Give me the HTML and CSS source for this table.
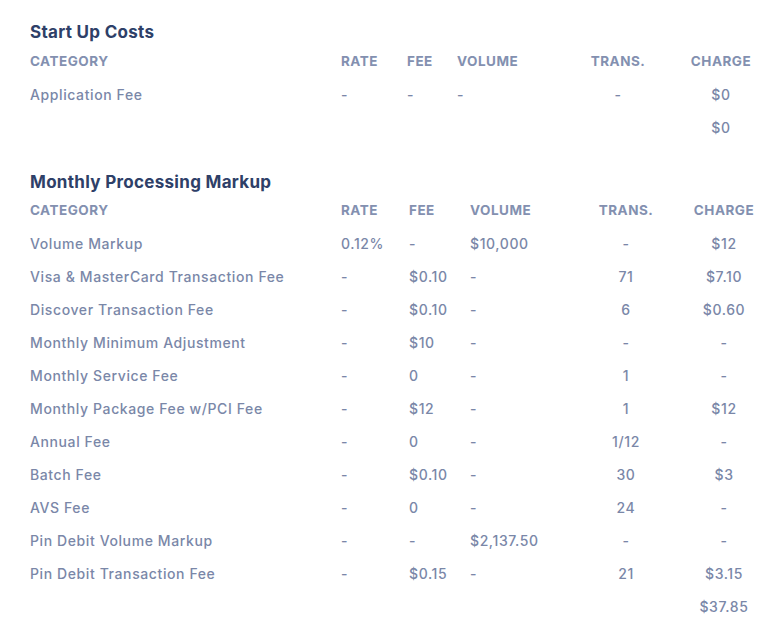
FILE: index.html
```html
<!DOCTYPE html>
<html>
<head>
<meta charset="utf-8">
<link rel="stylesheet" href="styles.css">
</head>
<body>
<div class="page">
  <section class="section s1">
    <h2 class="title">Start Up Costs</h2>
    <div class="grid g1">
      <div class="row head"><span>Category</span><span>Rate</span><span>Fee</span><span>Volume</span><span class="c">Trans.</span><span class="c">Charge</span></div>
      <div class="row"><span>Application Fee</span><span>-</span><span>-</span><span>-</span><span class="c">-</span><span class="c">$0</span></div>
      <div class="row"><span></span><span></span><span></span><span></span><span class="c"></span><span class="c">$0</span></div>
    </div>
  </section>
  <section class="section s2">
    <h2 class="title">Monthly Processing Markup</h2>
    <div class="grid g2">
      <div class="row head"><span>Category</span><span>Rate</span><span>Fee</span><span>Volume</span><span class="c">Trans.</span><span class="c">Charge</span></div>
      <div class="row"><span>Volume Markup</span><span>0.12%</span><span>-</span><span>$10,000</span><span class="c">-</span><span class="c">$12</span></div>
      <div class="row"><span>Visa &amp; MasterCard Transaction Fee</span><span>-</span><span>$0.10</span><span>-</span><span class="c">71</span><span class="c">$7.10</span></div>
      <div class="row"><span>Discover Transaction Fee</span><span>-</span><span>$0.10</span><span>-</span><span class="c">6</span><span class="c">$0.60</span></div>
      <div class="row"><span>Monthly Minimum Adjustment</span><span>-</span><span>$10</span><span>-</span><span class="c">-</span><span class="c">-</span></div>
      <div class="row"><span>Monthly Service Fee</span><span>-</span><span>0</span><span>-</span><span class="c">1</span><span class="c">-</span></div>
      <div class="row"><span>Monthly Package Fee w/PCI Fee</span><span>-</span><span>$12</span><span>-</span><span class="c">1</span><span class="c">$12</span></div>
      <div class="row"><span>Annual Fee</span><span>-</span><span>0</span><span>-</span><span class="c">1/12</span><span class="c">-</span></div>
      <div class="row"><span>Batch Fee</span><span>-</span><span>$0.10</span><span>-</span><span class="c">30</span><span class="c">$3</span></div>
      <div class="row"><span>AVS Fee</span><span>-</span><span>0</span><span>-</span><span class="c">24</span><span class="c">-</span></div>
      <div class="row"><span>Pin Debit Volume Markup</span><span>-</span><span>-</span><span>$2,137.50</span><span class="c">-</span><span class="c">-</span></div>
      <div class="row"><span>Pin Debit Transaction Fee</span><span>-</span><span>$0.15</span><span>-</span><span class="c">21</span><span class="c">$3.15</span></div>
      <div class="row"><span></span><span></span><span></span><span></span><span class="c"></span><span class="c">$37.85</span></div>
    </div>
  </section>
</div>
</body>
</html>
```
FILE: styles.css
```css
html, body {
  margin: 0;
  padding: 0;
  background: #ffffff;
}
body {
  font-family: Inter, "Open Sans", "Liberation Sans", sans-serif;
  color: #7a87a8;
}
.page {
  padding: 20px 0 0 30px;
  display: flex;
  flex-direction: column;
  gap: 26px;
}
.title {
  margin: 0;
  font-size: 17px;
  font-weight: 700;
  color: #2e4068;
  line-height: 24px;
  letter-spacing: 0.3px;
}
.grid {
  display: flex;
  flex-direction: column;
}
.row {
  display: grid;
  height: 33px;
  align-items: center;
  font-size: 14px;
  font-weight: 500;
  letter-spacing: 0.6px;
}
.g1 .row {
  grid-template-columns: 311px 66px 50px 114px 94px 112px;
}
.g2 .row {
  grid-template-columns: 311px 68px 61px 108px 96px 100px;
}
.row.head {
  height: 25px;
  align-items: start;
  margin-top: 8px;
  text-transform: uppercase;
  font-weight: 700;
  font-size: 13.5px;
  letter-spacing: 0.5px;
  color: #8390b0;
}
.g1 .row.head {
  margin-top: 9px;
}
.row.head span {
  line-height: 16px;
}
.c {
  text-align: center;
}
```
